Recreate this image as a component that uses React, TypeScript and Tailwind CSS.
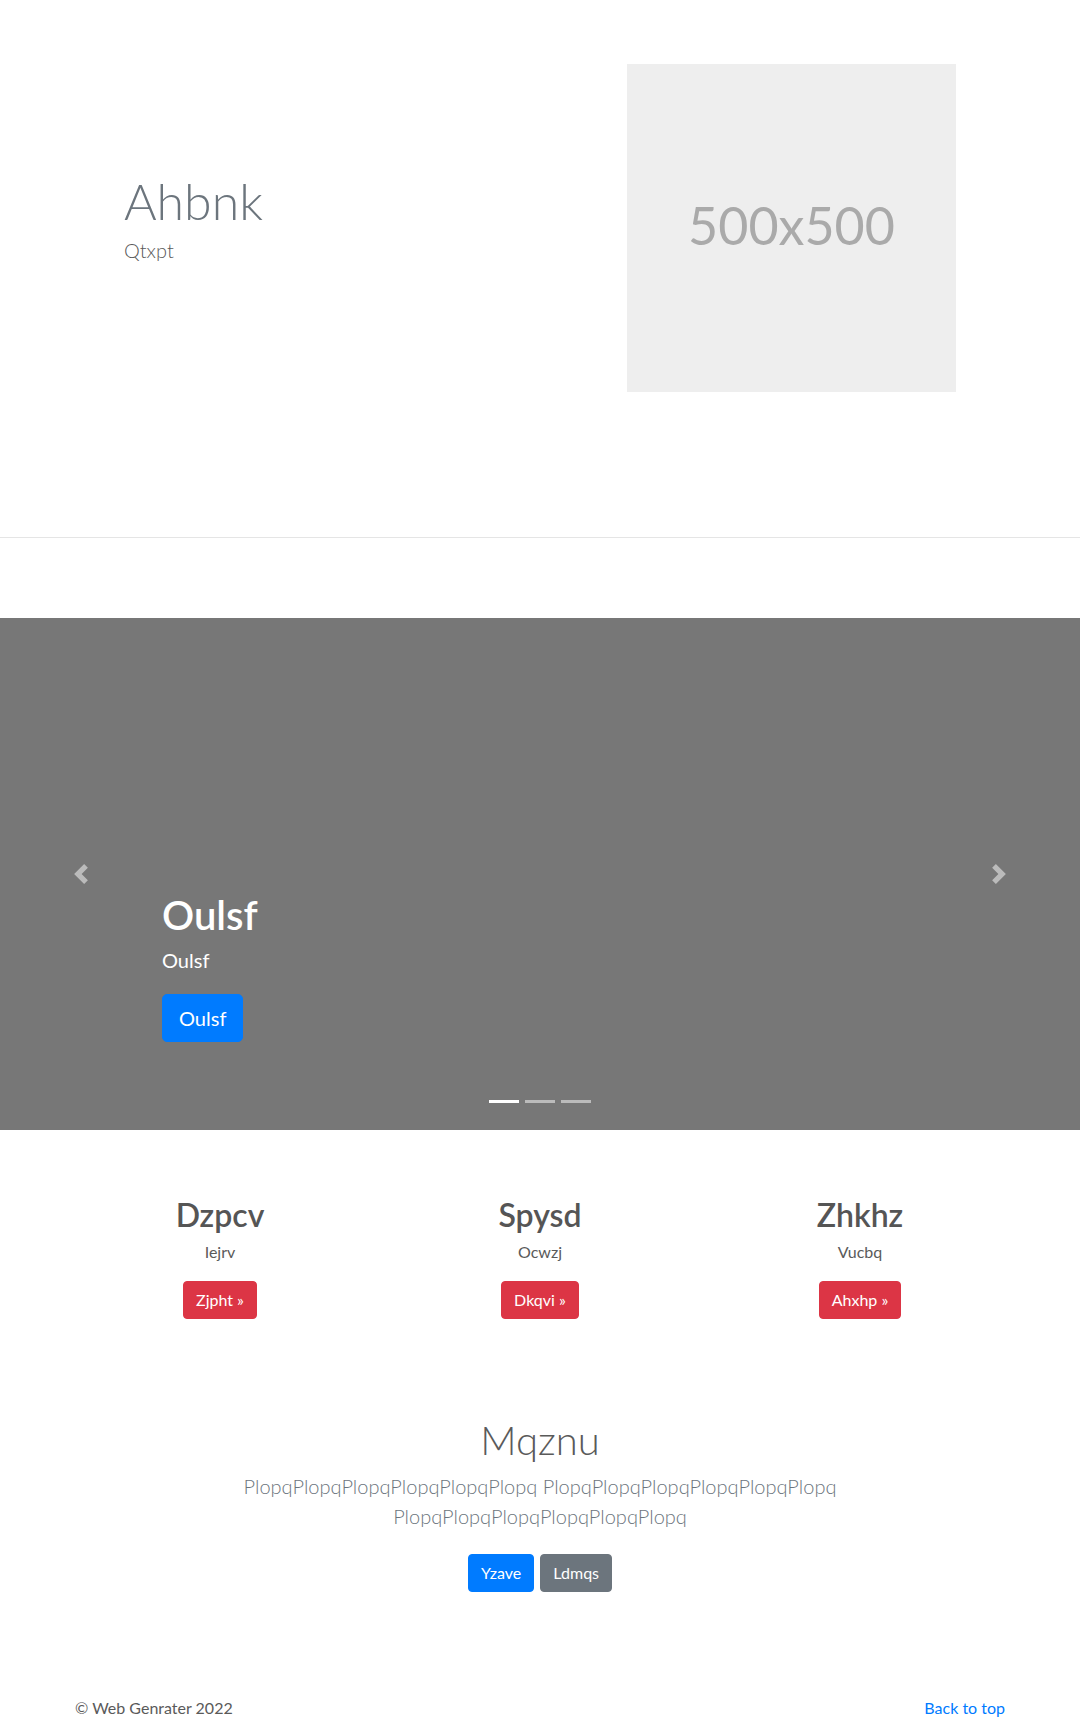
import React from "react";

const features = [
  { title: "Dzpcv", text: "Iejrv", cta: "Zjpht" },
  { title: "Spysd", text: "Ocwzj", cta: "Dkqvi" },
  { title: "Zhkhz", text: "Vucbq", cta: "Ahxhp" },
];

function ChevronLeft() {
  return (
    <svg width="20" height="20" viewBox="0 0 8 8" fill="#fff">
      <path d="M5.25 0l-4 4 4 4 1.5-1.5L4.25 4l2.5-2.5L5.25 0z" />
    </svg>
  );
}

function ChevronRight() {
  return (
    <svg width="20" height="20" viewBox="0 0 8 8" fill="#fff">
      <path d="M2.75 0l-1.5 1.5L3.75 4l-2.5 2.5L2.75 8l4-4-4-4z" />
    </svg>
  );
}

export default function App() {
  return (
    <div className="min-h-[1721px] bg-white font-['Lato','Segoe_UI',sans-serif] text-base leading-normal text-[#5a5a5a]">
      {/* hero */}
      <section className="h-[538px] border-b border-[#e5e5e5]">
        <div className="mx-auto flex w-[960px] px-[15px] pt-[64px]">
          <div className="w-[480px] pl-[49px] pt-[107px]">
            <h1 className="text-[50px] font-light leading-[1.2] text-[#6c757d]">Ahbnk</h1>
            <p className="mt-[4px] text-[20px] font-light leading-[30px]">Qtxpt</p>
          </div>
          <div className="flex-1">
            <div className="ml-[72px] flex h-[328px] w-[329px] items-center justify-center bg-[#eeeeee] pb-[6px] text-[52px] text-[#aaaaaa]">
              500x500
            </div>
          </div>
        </div>
      </section>

      {/* carousel */}
      <div className="relative mt-[80px] h-[512px] bg-[#777777]">
        <div className="absolute inset-y-0 left-0 flex w-[15%] items-center justify-center opacity-50">
          <ChevronLeft />
        </div>
        <div className="absolute inset-y-0 right-0 flex w-[15%] items-center justify-center opacity-50">
          <ChevronRight />
        </div>
        <div className="absolute bottom-[88px] left-[15%] right-[15%] text-left text-white">
          <h1 className="mb-[6px] text-[40px] font-semibold leading-[48px]">Oulsf</h1>
          <p className="mb-[19px] text-[20px] leading-[30px]">Oulsf</p>
          <a className="inline-block rounded-[5px] border border-[#007bff] bg-[#007bff] px-[16px] py-[8px] text-[20px] leading-[30px] text-white">
            Oulsf
          </a>
        </div>
        <div className="absolute inset-x-0 bottom-[27px] flex justify-center">
          <span className="mx-[3px] h-[3px] w-[30px] bg-white" />
          <span className="mx-[3px] h-[3px] w-[30px] bg-white opacity-50" />
          <span className="mx-[3px] h-[3px] w-[30px] bg-white opacity-50" />
        </div>
      </div>

      {/* marketing */}
      <div className="mx-auto mt-[66px] grid w-[960px] grid-cols-3 text-center">
        {features.map((f) => (
          <div key={f.title} className="flex flex-col items-center px-[15px]">
            <h2 className="mb-[6px] text-[32px] font-semibold leading-[38px] text-[#555555]">{f.title}</h2>
            <p className="mb-[17px] leading-[24px]">{f.text}</p>
            <a className="inline-block rounded-[4px] border border-[#dc3545] bg-[#dc3545] px-[12px] py-[6px] leading-[24px] text-white">
              {f.cta} &raquo;
            </a>
          </div>
        ))}
      </div>

      {/* featurette */}
      <div className="mx-auto mt-[97px] w-[610px] text-center">
        <h2 className="text-[40px] font-light leading-[48px]">Mqznu</h2>
        <p className="mt-[7px] text-[20px] font-light leading-[30px] text-[#6c757d]">
          PlopqPlopqPlopqPlopqPlopqPlopq PlopqPlopqPlopqPlopqPlopqPlopq PlopqPlopqPlopqPlopqPlopqPlopq
        </p>
        <div className="mt-[23px] flex justify-center gap-[6px]">
          <a className="inline-block rounded-[4px] border border-[#007bff] bg-[#007bff] px-[12px] py-[6px] leading-[24px] text-white">Yzave</a>
          <a className="inline-block rounded-[4px] border border-[#6c757d] bg-[#6c757d] px-[12px] py-[6px] leading-[24px] text-white">Ldmqs</a>
        </div>
      </div>

      {/* footer */}
      <footer className="mx-auto mt-[104px] flex w-[960px] justify-between px-[15px] leading-[24px]">
        <p>&copy; Web Genrater 2022</p>
        <a className="text-[#007bff]">Back to top</a>
      </footer>
    </div>
  );
}
